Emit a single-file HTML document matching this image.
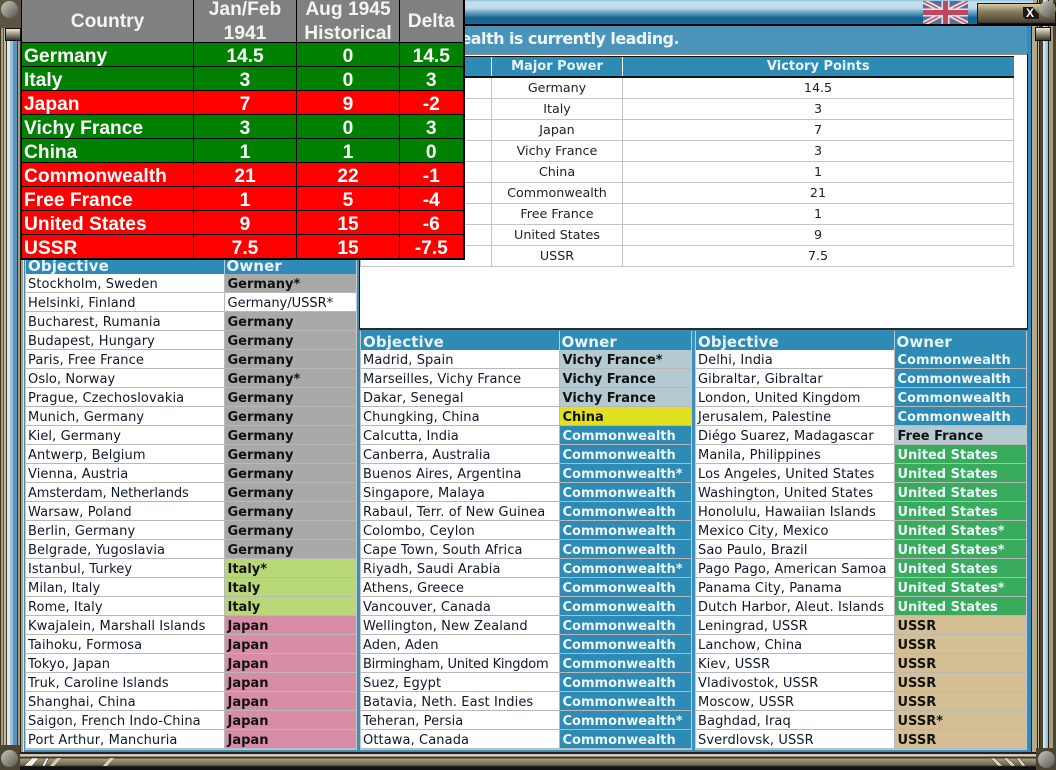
<!DOCTYPE html>
<html><head><meta charset="utf-8"><style>
html,body{margin:0;padding:0;background:#000}
#p{position:relative;width:1056px;height:770px;overflow:hidden;background:#3c8fbb;font-family:"DejaVu Sans",Verdana,sans-serif}
.a{position:absolute}
table{border-collapse:collapse;table-layout:fixed;position:absolute}
.o{width:330px;font-size:13px;color:#101828}
.o td{height:15px;padding:3px 0 0 2px;border-bottom:1px solid #b8b8b8;border-left:1px solid #b8b8b8;background:#fff;line-height:15px;white-space:nowrap;overflow:hidden;letter-spacing:.1px}
.o td:first-child{border-left:0}
.o td+td{font-weight:bold;color:#111;letter-spacing:0;padding-left:3px}
.o th{background:#2e8bb5;color:#e8f4fa;font-size:15px;font-weight:bold;text-align:left;padding:3px 0 0 2px;border-left:1px solid #b8d0dc;line-height:16px;height:16px;letter-spacing:.1px}
.o th:first-child{border-left:0}
.o td.g{background:#a9a9a9}.o td.i{background:#b8d878}.o td.j{background:#d78da7}.o td.v{background:#b5c9d1}.o td.h{background:#e0e020}.o td.c{background:#2e8bb5;color:#eef7fb}.o td.u{background:#39ab5d;color:#eef7fb}.o td.s{background:#d4bf94}.o td.n{font-weight:normal;color:#101828;background:#fff}
#vp td{height:20px;border:1px solid #c4c4c4;border-top:0;text-align:center;font-size:12.7px;color:#222;padding:0;background:#fff;line-height:20px}
#vp th{height:19px;background:#2e8bb5;color:#e8f4fa;font-size:13px;font-weight:bold;border-left:1px solid #fff;padding:0;border-bottom:2px solid #111;border-top:1px solid #111}
#ov{left:21px;top:-4px;width:442px;font-family:"Liberation Sans",Arial,sans-serif;font-weight:bold;color:#fff;font-size:19.2px;border-right:2px solid #000;border-bottom:2px solid #000;border-left:1px solid #000;box-sizing:border-box}
#ov td{height:18px;line-height:18px;padding:5px 0 0 0;border:1px solid #000;text-align:center;white-space:nowrap;overflow:hidden}
#ov td:first-child{text-align:left;padding-left:2px}
#ov tr.g td{background:#008000}
#ov tr.r td{background:#ff0000}
#ov th{background:#808080;color:#f4f4f0;font-size:19.2px;line-height:24px;height:46px;padding:0;border:1px solid #000;border-top:0;font-weight:bold;vertical-align:top}
#ov th div{height:46px;white-space:nowrap;position:relative;top:2px}
#ov th div.l{line-height:48px}
</style></head><body><div id="p">

<!-- frame -->
<div class="a" style="left:0;top:0;width:26px;height:770px;background:linear-gradient(90deg,#3a3628 0,#3a3628 1px,#a89c7c 1px,#a89c7c 3px,#5c5440 3px,#5c5440 4px,#c4baa0 4px,#c4baa0 6px,#3a3628 6px,#3a3628 7px,#dfe9f0 7px,#dfe9f0 10px,#9dc0da 10px,#9dc0da 13px,#5a93bf 13px,#5a93bf 17px,#3a3628 17px,#3a3628 18px,#a89c7c 18px,#a89c7c 20px,#2a2618 20px,#2a2618 21px,#a89c7c 21px,#a89c7c 23px,#d8e6ee 23px,#d8e6ee 24px,#3c8fbb 24px)"></div>
<div class="a" style="left:1027px;top:0;width:29px;height:770px;background:linear-gradient(90deg,#2f8cc0 0,#2f8cc0 4px,#222 4px,#222 5px,#b4a888 5px,#b4a888 10px,#222 10px,#222 11px,#c4baa0 11px,#c4baa0 12px,#222 12px,#222 13px,#4a4433 13px,#4a4433 16px,#e6f0f6 16px,#8db8d4 21px,#222 21px,#222 22px,#a89c7c 22px,#a89c7c 26px,#4a4433 26px)"></div>
<div class="a" style="left:0;top:752px;width:1056px;height:18px;background:linear-gradient(180deg,#222 0,#222 2px,#c4baa0 2px,#e0d8c0 4px,#3a3628 5px,#3a3628 6px,#a89c7c 7px,#6e6650 13px,#3a3628 14px,#111 15px,#111 18px)"></div>
<svg class="a" style="left:0;top:750px" width="1056" height="20">
<path d="M24 16h8l7-8H32z" fill="#f4f4f0" stroke="#222" stroke-width=".5"/>
<path d="M42 16h3l4-8h-3z" fill="#f4f4f0" stroke="#222" stroke-width=".5"/>
<path d="M50 16h4l7-8h-4z" fill="#d8d0b8"/>
<path d="M103 16h4l7-8h-4z" fill="#d8d0b8"/>
<path d="M990 8h5l8 8h-5zM1003 8h5l8 8h-5zM1016 8h4l6 8h-4z" fill="#d8d0b8" stroke="#222" stroke-width=".5"/>
</svg>

<!-- corner screws -->
<div class="a" style="left:0;top:0;width:21px;height:28px;background:#5c5440"></div>
<div class="a" style="left:1px;top:1px;width:17px;height:17px;border-radius:50%;background:linear-gradient(135deg,#c8c8c0,#55554c)"></div>
<div class="a" style="left:5px;top:28px;width:14px;height:11px;background:linear-gradient(180deg,#eee8d4,#3a3628);border:1px solid #111"></div>
<div class="a" style="left:0;top:745px;width:20px;height:25px;background:#4a4433"></div>
<div class="a" style="left:1px;top:750px;width:17px;height:17px;border-radius:50%;background:linear-gradient(135deg,#c8c8c0,#55554c)"></div>
<div class="a" style="left:1036px;top:748px;width:20px;height:22px;background:#4a4433"></div>
<div class="a" style="left:1038px;top:751px;width:17px;height:17px;border-radius:50%;background:linear-gradient(135deg,#c8c8c0,#55554c)"></div>

<!-- title bar -->
<div class="a" style="left:463px;top:0;width:570px;height:24px;background:linear-gradient(180deg,#8fc0d8 0,#c6dfec 2px,#c2dcea 8px,#5d9dbd 13px,#14628e 18px,#186a98 24px)"></div>
<div class="a" style="left:463px;top:24px;width:593px;height:2px;background:#000"></div>
<svg class="a" style="left:923px;top:1px" width="45" height="23" viewBox="0 0 45 23">
<rect width="45" height="23" fill="#5a6f9e"/>
<path d="M0 0L45 23M45 0L0 23" stroke="#e8e0e4" stroke-width="5"/>
<path d="M0 0L45 23M45 0L0 23" stroke="#c2556c" stroke-width="1.6"/>
<path d="M22.5 0V23M0 11.5H45" stroke="#e8e0e4" stroke-width="8"/>
<path d="M22.5 0V23M0 11.5H45" stroke="#c2475e" stroke-width="5"/>
</svg>
<div class="a" style="left:977px;top:3px;width:79px;height:21px;background:linear-gradient(180deg,#d8ccaa 0,#85795c 8px,#5a5040 16px,#2a2618 21px);border:1px solid #111;box-sizing:border-box"></div>
<div class="a" style="left:1023px;top:7px;width:16px;height:12px;background:#1c1a14;clip-path:polygon(0 0,60% 0,100% 60%,100% 100%,15% 100%,0 80%);color:#fff;font:bold 12px/12px 'Liberation Sans',sans-serif;text-indent:3px">X</div>
<div class="a" style="left:1039px;top:1px;width:17px;height:16px;border-radius:50%;background:linear-gradient(135deg,#c8c8c0,#55554c)"></div>
<div class="a" style="left:1035px;top:27px;width:14px;height:12px;background:linear-gradient(180deg,#eee8d4,#3a3628);border:1px solid #111"></div>

<!-- banner -->
<div class="a" style="left:360px;top:26px;width:667px;height:27px;background:#4a94bb"></div>
<div class="a" style="right:377px;top:26px;color:#eef6fa;font:bold 16px/26px 'DejaVu Sans',Verdana,sans-serif;white-space:nowrap;letter-spacing:-.55px">The Commonwealth is currently leading.</div>
<div class="a" style="left:359px;top:53px;width:669px;height:276px;background:#fff;border:1px solid #111;border-top:2px solid #8a8a80;box-sizing:border-box"></div>
<div class="a" style="left:359px;top:328px;width:669px;height:2px;background:#2a2a22"></div>

<table id="vp" style="left:360px;top:56px;width:653px">
<colgroup><col style="width:131px"><col style="width:131px"><col style="width:391px"></colgroup>
<tr><th>Rank</th><th>Major Power</th><th>Victory Points</th></tr>
<tr><td>1</td><td>Germany</td><td>14.5</td></tr>
<tr><td>2</td><td>Italy</td><td>3</td></tr>
<tr><td>3</td><td>Japan</td><td>7</td></tr>
<tr><td>4</td><td>Vichy France</td><td>3</td></tr>
<tr><td>5</td><td>China</td><td>1</td></tr>
<tr><td>6</td><td>Commonwealth</td><td>21</td></tr>
<tr><td>7</td><td>Free France</td><td>1</td></tr>
<tr><td>8</td><td>United States</td><td>9</td></tr>
<tr><td>9</td><td>USSR</td><td>7.5</td></tr>
</table>

<!-- left -->
<div class="a" style="left:25px;top:255px;width:332px;height:495px;background:#c8c8c8"></div>
<table class="o" style="left:26px;top:255px">
<colgroup><col style="width:198px"><col style="width:132px"></colgroup>
<tr><th>Objective</th><th>Owner</th></tr>
<tr><td>Stockholm, Sweden</td><td class="g">Germany*</td></tr>
<tr><td>Helsinki, Finland</td><td class="n">Germany/USSR*</td></tr>
<tr><td>Bucharest, Rumania</td><td class="g">Germany</td></tr>
<tr><td>Budapest, Hungary</td><td class="g">Germany</td></tr>
<tr><td>Paris, Free France</td><td class="g">Germany</td></tr>
<tr><td>Oslo, Norway</td><td class="g">Germany*</td></tr>
<tr><td>Prague, Czechoslovakia</td><td class="g">Germany</td></tr>
<tr><td>Munich, Germany</td><td class="g">Germany</td></tr>
<tr><td>Kiel, Germany</td><td class="g">Germany</td></tr>
<tr><td>Antwerp, Belgium</td><td class="g">Germany</td></tr>
<tr><td>Vienna, Austria</td><td class="g">Germany</td></tr>
<tr><td style="letter-spacing:-.1px">Amsterdam, Netherlands</td><td class="g">Germany</td></tr>
<tr><td>Warsaw, Poland</td><td class="g">Germany</td></tr>
<tr><td>Berlin, Germany</td><td class="g">Germany</td></tr>
<tr><td>Belgrade, Yugoslavia</td><td class="g">Germany</td></tr>
<tr><td>Istanbul, Turkey</td><td class="i">Italy*</td></tr>
<tr><td>Milan, Italy</td><td class="i">Italy</td></tr>
<tr><td>Rome, Italy</td><td class="i">Italy</td></tr>
<tr><td>Kwajalein, Marshall Islands</td><td class="j">Japan</td></tr>
<tr><td>Taihoku, Formosa</td><td class="j">Japan</td></tr>
<tr><td>Tokyo, Japan</td><td class="j">Japan</td></tr>
<tr><td>Truk, Caroline Islands</td><td class="j">Japan</td></tr>
<tr><td>Shanghai, China</td><td class="j">Japan</td></tr>
<tr><td>Saigon, French Indo-China</td><td class="j">Japan</td></tr>
<tr><td>Port Arthur, Manchuria</td><td class="j">Japan</td></tr>
</table>

<!-- middle -->
<div class="a" style="left:360px;top:331px;width:332px;height:419px;background:#c8c8c8"></div>
<table class="o" style="left:361px;top:331px">
<colgroup><col style="width:198px"><col style="width:132px"></colgroup>
<tr><th>Objective</th><th>Owner</th></tr>
<tr><td>Madrid, Spain</td><td class="v">Vichy France*</td></tr>
<tr><td>Marseilles, Vichy France</td><td class="v">Vichy France</td></tr>
<tr><td>Dakar, Senegal</td><td class="v">Vichy France</td></tr>
<tr><td>Chungking, China</td><td class="h">China</td></tr>
<tr><td>Calcutta, India</td><td class="c">Commonwealth</td></tr>
<tr><td>Canberra, Australia</td><td class="c">Commonwealth</td></tr>
<tr><td>Buenos Aires, Argentina</td><td class="c">Commonwealth*</td></tr>
<tr><td>Singapore, Malaya</td><td class="c">Commonwealth</td></tr>
<tr><td>Rabaul, Terr. of New Guinea</td><td class="c">Commonwealth</td></tr>
<tr><td>Colombo, Ceylon</td><td class="c">Commonwealth</td></tr>
<tr><td>Cape Town, South Africa</td><td class="c">Commonwealth</td></tr>
<tr><td>Riyadh, Saudi Arabia</td><td class="c">Commonwealth*</td></tr>
<tr><td>Athens, Greece</td><td class="c">Commonwealth</td></tr>
<tr><td>Vancouver, Canada</td><td class="c">Commonwealth</td></tr>
<tr><td>Wellington, New Zealand</td><td class="c">Commonwealth</td></tr>
<tr><td>Aden, Aden</td><td class="c">Commonwealth</td></tr>
<tr><td style="letter-spacing:-.25px">Birmingham, United Kingdom</td><td class="c">Commonwealth</td></tr>
<tr><td>Suez, Egypt</td><td class="c">Commonwealth</td></tr>
<tr><td>Batavia, Neth. East Indies</td><td class="c">Commonwealth</td></tr>
<tr><td>Teheran, Persia</td><td class="c">Commonwealth*</td></tr>
<tr><td>Ottawa, Canada</td><td class="c">Commonwealth</td></tr>
</table>

<!-- right -->
<div class="a" style="left:695px;top:331px;width:332px;height:419px;background:#c8c8c8"></div>
<table class="o" style="left:696px;top:331px">
<colgroup><col style="width:198px"><col style="width:132px"></colgroup>
<tr><th>Objective</th><th>Owner</th></tr>
<tr><td>Delhi, India</td><td class="c">Commonwealth</td></tr>
<tr><td>Gibraltar, Gibraltar</td><td class="c">Commonwealth</td></tr>
<tr><td>London, United Kingdom</td><td class="c">Commonwealth</td></tr>
<tr><td>Jerusalem, Palestine</td><td class="c">Commonwealth</td></tr>
<tr><td>Diégo Suarez, Madagascar</td><td class="v">Free France</td></tr>
<tr><td>Manila, Philippines</td><td class="u">United States</td></tr>
<tr><td>Los Angeles, United States</td><td class="u">United States</td></tr>
<tr><td>Washington, United States</td><td class="u">United States</td></tr>
<tr><td>Honolulu, Hawaiian Islands</td><td class="u">United States</td></tr>
<tr><td>Mexico City, Mexico</td><td class="u">United States*</td></tr>
<tr><td>Sao Paulo, Brazil</td><td class="u">United States*</td></tr>
<tr><td>Pago Pago, American Samoa</td><td class="u">United States</td></tr>
<tr><td>Panama City, Panama</td><td class="u">United States*</td></tr>
<tr><td>Dutch Harbor, Aleut. Islands</td><td class="u">United States</td></tr>
<tr><td>Leningrad, USSR</td><td class="s">USSR</td></tr>
<tr><td>Lanchow, China</td><td class="s">USSR</td></tr>
<tr><td>Kiev, USSR</td><td class="s">USSR</td></tr>
<tr><td>Vladivostok, USSR</td><td class="s">USSR</td></tr>
<tr><td>Moscow, USSR</td><td class="s">USSR</td></tr>
<tr><td>Baghdad, Iraq</td><td class="s">USSR*</td></tr>
<tr><td>Sverdlovsk, USSR</td><td class="s">USSR</td></tr>
</table>

<!-- overlay -->
<table id="ov">
<colgroup><col style="width:172px"><col style="width:103px"><col style="width:103px"><col style="width:64px"></colgroup>
<tr><th><div class="l">Country</div></th><th><div>Jan/Feb<br>1941</div></th><th><div>Aug 1945<br>Historical</div></th><th><div class="l">Delta</div></th></tr>
<tr class="g"><td>Germany</td><td>14.5</td><td>0</td><td>14.5</td></tr>
<tr class="g"><td>Italy</td><td>3</td><td>0</td><td>3</td></tr>
<tr class="r"><td>Japan</td><td>7</td><td>9</td><td>-2</td></tr>
<tr class="g"><td>Vichy France</td><td>3</td><td>0</td><td>3</td></tr>
<tr class="g"><td>China</td><td>1</td><td>1</td><td>0</td></tr>
<tr class="r"><td>Commonwealth</td><td>21</td><td>22</td><td>-1</td></tr>
<tr class="r"><td>Free France</td><td>1</td><td>5</td><td>-4</td></tr>
<tr class="r"><td>United States</td><td>9</td><td>15</td><td>-6</td></tr>
<tr class="r"><td>USSR</td><td>7.5</td><td>15</td><td>-7.5</td></tr>
</table>
</div></body></html>
